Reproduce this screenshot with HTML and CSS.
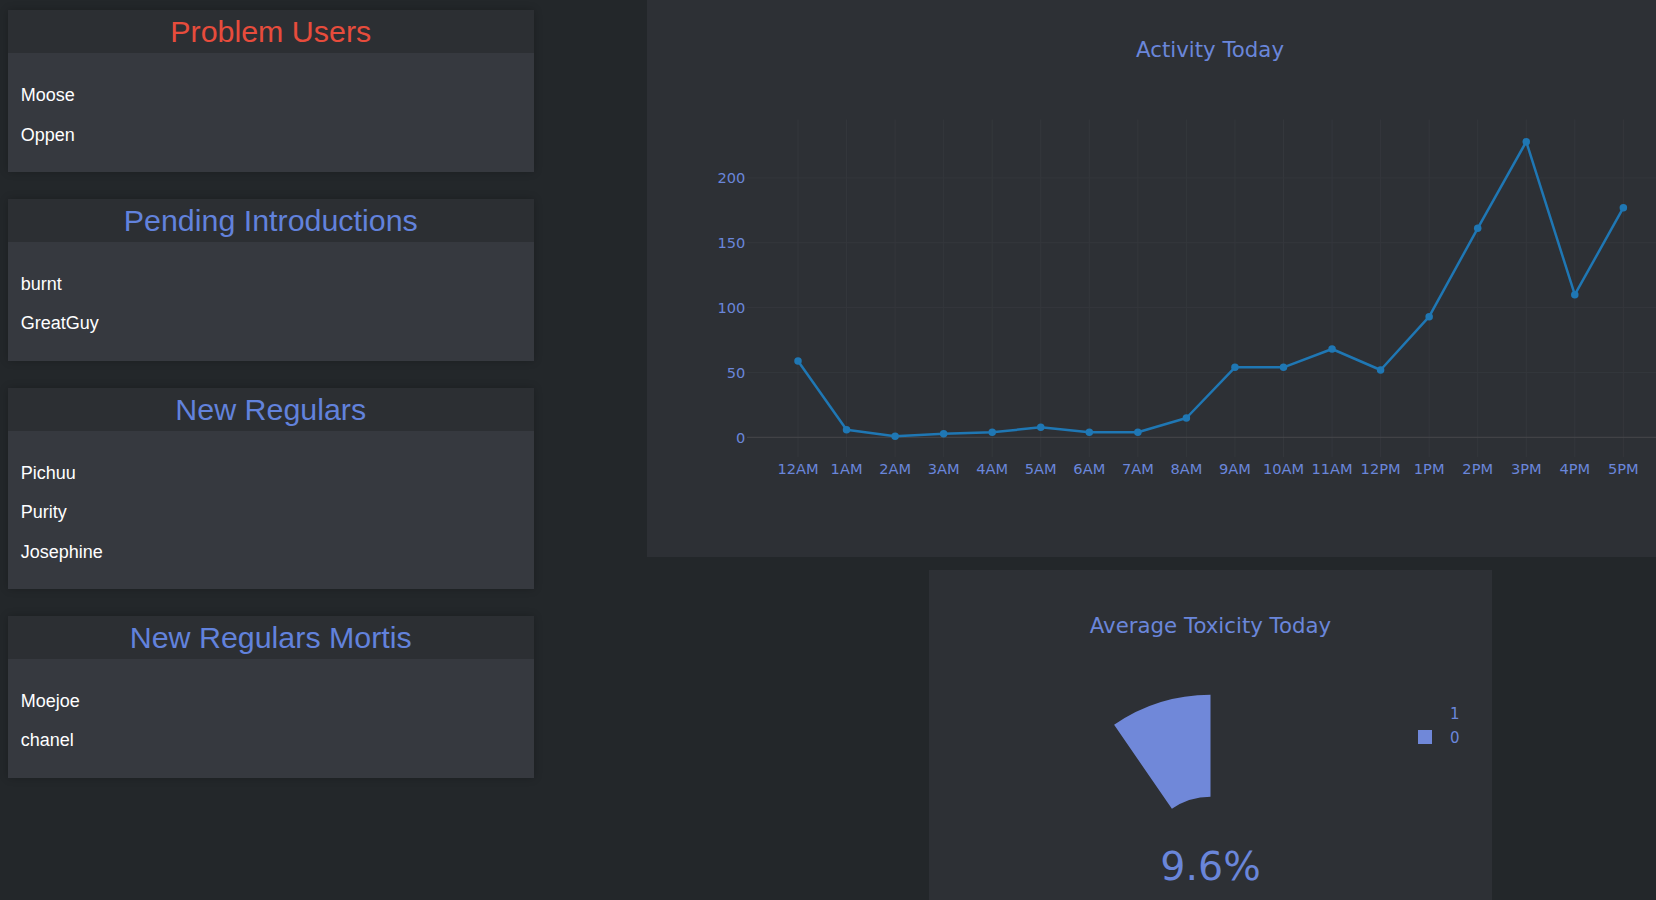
FILE: index.html
```html
<!DOCTYPE html>
<html>
<head>
<meta charset="utf-8">
<title>Dashboard</title>
<link rel="stylesheet" href="styles.css">
</head>
<body>
<div class="page">
  <aside class="lists">
    <section class="card">
      <h2 class="card-title danger">Problem Users</h2>
      <ul class="card-list"><li>Moose</li><li>Oppen</li></ul>
    </section>
    <section class="card">
      <h2 class="card-title">Pending Introductions</h2>
      <ul class="card-list"><li>burnt</li><li>GreatGuy</li></ul>
    </section>
    <section class="card">
      <h2 class="card-title">New Regulars</h2>
      <ul class="card-list"><li>Pichuu</li><li>Purity</li><li>Josephine</li></ul>
    </section>
    <section class="card">
      <h2 class="card-title">New Regulars Mortis</h2>
      <ul class="card-list"><li>Moejoe</li><li>chanel</li></ul>
    </section>
  </aside>

  <main class="charts">
    <div class="panel panel-activity">
      <svg class="chart" width="1126" height="557" viewBox="0 0 1126 557">
        <text class="chart-title" x="563" y="57.3">Activity Today</text>
        <g class="grid">
          <line x1="151" y1="119.5" x2="151" y2="457"/>
          <line x1="199.55" y1="119.5" x2="199.55" y2="457"/>
          <line x1="248.1" y1="119.5" x2="248.1" y2="457"/>
          <line x1="296.65" y1="119.5" x2="296.65" y2="457"/>
          <line x1="345.2" y1="119.5" x2="345.2" y2="457"/>
          <line x1="393.75" y1="119.5" x2="393.75" y2="457"/>
          <line x1="442.3" y1="119.5" x2="442.3" y2="457"/>
          <line x1="490.85" y1="119.5" x2="490.85" y2="457"/>
          <line x1="539.4" y1="119.5" x2="539.4" y2="457"/>
          <line x1="587.95" y1="119.5" x2="587.95" y2="457"/>
          <line x1="636.5" y1="119.5" x2="636.5" y2="457"/>
          <line x1="685.05" y1="119.5" x2="685.05" y2="457"/>
          <line x1="733.6" y1="119.5" x2="733.6" y2="457"/>
          <line x1="782.15" y1="119.5" x2="782.15" y2="457"/>
          <line x1="830.7" y1="119.5" x2="830.7" y2="457"/>
          <line x1="879.25" y1="119.5" x2="879.25" y2="457"/>
          <line x1="927.8" y1="119.5" x2="927.8" y2="457"/>
          <line x1="976.35" y1="119.5" x2="976.35" y2="457"/>
          <line x1="100" y1="177.9" x2="1027" y2="177.9"/>
          <line x1="100" y1="242.75" x2="1027" y2="242.75"/>
          <line x1="100" y1="307.6" x2="1027" y2="307.6"/>
          <line x1="100" y1="372.45" x2="1027" y2="372.45"/>
        </g>
        <line class="zero-line" x1="100" y1="437.3" x2="1027" y2="437.3"/>
        <g class="y-ticks">
          <text x="98.3" y="183.3">200</text>
          <text x="98.3" y="248.15">150</text>
          <text x="98.3" y="313">100</text>
          <text x="98.3" y="377.85">50</text>
          <text x="98.3" y="442.7">0</text>
        </g>
        <g class="x-ticks">
          <text x="151" y="474">12AM</text>
          <text x="199.55" y="474">1AM</text>
          <text x="248.1" y="474">2AM</text>
          <text x="296.65" y="474">3AM</text>
          <text x="345.2" y="474">4AM</text>
          <text x="393.75" y="474">5AM</text>
          <text x="442.3" y="474">6AM</text>
          <text x="490.85" y="474">7AM</text>
          <text x="539.4" y="474">8AM</text>
          <text x="587.95" y="474">9AM</text>
          <text x="636.5" y="474">10AM</text>
          <text x="685.05" y="474">11AM</text>
          <text x="733.6" y="474">12PM</text>
          <text x="782.15" y="474">1PM</text>
          <text x="830.7" y="474">2PM</text>
          <text x="879.25" y="474">3PM</text>
          <text x="927.8" y="474">4PM</text>
          <text x="976.35" y="474">5PM</text>
        </g>
        <polyline class="series" points="151,361 199.55,429.7 248.1,436.3 296.65,433.7 345.2,432.3 393.75,427.3 442.3,432.3 490.85,432.3 539.4,418 587.95,367.3 636.5,367.3 685.05,349 733.6,370 782.15,316.7 830.7,228.3 879.25,141.7 927.8,294.7 976.35,207.7"/>
        <g class="markers">
          <circle cx="151" cy="361" r="3.75"/>
          <circle cx="199.55" cy="429.7" r="3.75"/>
          <circle cx="248.1" cy="436.3" r="3.75"/>
          <circle cx="296.65" cy="433.7" r="3.75"/>
          <circle cx="345.2" cy="432.3" r="3.75"/>
          <circle cx="393.75" cy="427.3" r="3.75"/>
          <circle cx="442.3" cy="432.3" r="3.75"/>
          <circle cx="490.85" cy="432.3" r="3.75"/>
          <circle cx="539.4" cy="418" r="3.75"/>
          <circle cx="587.95" cy="367.3" r="3.75"/>
          <circle cx="636.5" cy="367.3" r="3.75"/>
          <circle cx="685.05" cy="349" r="3.75"/>
          <circle cx="733.6" cy="370" r="3.75"/>
          <circle cx="782.15" cy="316.7" r="3.75"/>
          <circle cx="830.7" cy="228.3" r="3.75"/>
          <circle cx="879.25" cy="141.7" r="3.75"/>
          <circle cx="927.8" cy="294.7" r="3.75"/>
          <circle cx="976.35" cy="207.7" r="3.75"/>
        </g>
      </svg>
    </div>

    <div class="panel panel-toxicity">
      <svg class="chart" width="563" height="562" viewBox="0 0 563 562">
        <text class="chart-title" x="281.5" y="62.7">Average Toxicity Today</text>
        <path class="wedge" d="M 281.5 124.8 A 170 170 0 0 0 185.1 154.8 L 242.9 238.8 A 68 68 0 0 1 281.5 226.8 Z"/>
        <g class="legend">
          <text x="525.8" y="149.3">1</text>
          <rect class="legend-swatch" x="489" y="160" width="14" height="14"/>
          <text x="525.8" y="173.3">0</text>
        </g>
        <text class="big-number" x="281.5" y="310">9.6%</text>
      </svg>
    </div>
  </main>
</div>
</body>
</html>
```

FILE: styles.css
```css
html,
body {
  margin: 0;
  padding: 0;
  height: 100%;
  overflow: hidden;
  background: #23272a;
}

.page {
  display: flex;
  align-items: flex-start;
  height: 900px;
  overflow: hidden;
}

/* Left column of user lists */
.lists {
  flex: 0 0 525.5px;
  margin-left: 8px;
  padding-top: 10px;
  display: flex;
  flex-direction: column;
  gap: 26.8px;
}

.card {
  background: #36393f;
  box-shadow: 0 0 8px rgba(0, 0, 0, 0.22);
}

.card-title {
  margin: 0;
  height: 43px;
  line-height: 43px;
  background: #2c2f33;
  text-align: center;
  white-space: nowrap;
  font-family: "Liberation Sans", Arial, sans-serif;
  font-weight: 400;
  font-size: 30.4px;
  color: #6282dc;
}

.card-title.danger {
  color: #e74c3c;
}

.card-list {
  list-style: none;
  margin: 0;
  padding: 23px 0 17px 12.7px;
}

.card-list li {
  font-family: "Liberation Sans", Arial, sans-serif;
  font-size: 18px;
  line-height: 39.5px;
  color: #ffffff;
}

/* Right column of charts */
.charts {
  flex: 0 0 1126px;
  margin-left: 113.5px;
  display: flex;
  flex-direction: column;
  gap: 13px;
}

.panel {
  background: #2d3035;
}

.panel-activity {
  height: 557px;
}

.panel-toxicity {
  width: 563px;
  height: 562px;
  align-self: center;
}

.chart {
  display: block;
  font-family: "DejaVu Sans", Verdana, sans-serif;
}

.chart-title {
  font-size: 21.3px;
  fill: #6a86da;
  text-anchor: middle;
}

.grid line {
  stroke: #34373c;
  stroke-width: 1;
}

.zero-line {
  stroke: #46484c;
  stroke-width: 1;
}

.y-ticks text {
  font-size: 14.6px;
  fill: #6a86da;
  text-anchor: end;
}

.x-ticks text {
  font-size: 14.6px;
  fill: #6a86da;
  text-anchor: middle;
}

.series {
  fill: none;
  stroke: #1f77b4;
  stroke-width: 2.5;
  stroke-linejoin: round;
}

.markers circle {
  fill: #1f77b4;
}

.wedge {
  fill: #7088d9;
}

.legend text {
  font-size: 15px;
  fill: #6a86da;
  text-anchor: middle;
}

.legend-swatch {
  fill: #7088d9;
}

.big-number {
  font-size: 39.5px;
  fill: #6a86da;
  text-anchor: middle;
}
```
